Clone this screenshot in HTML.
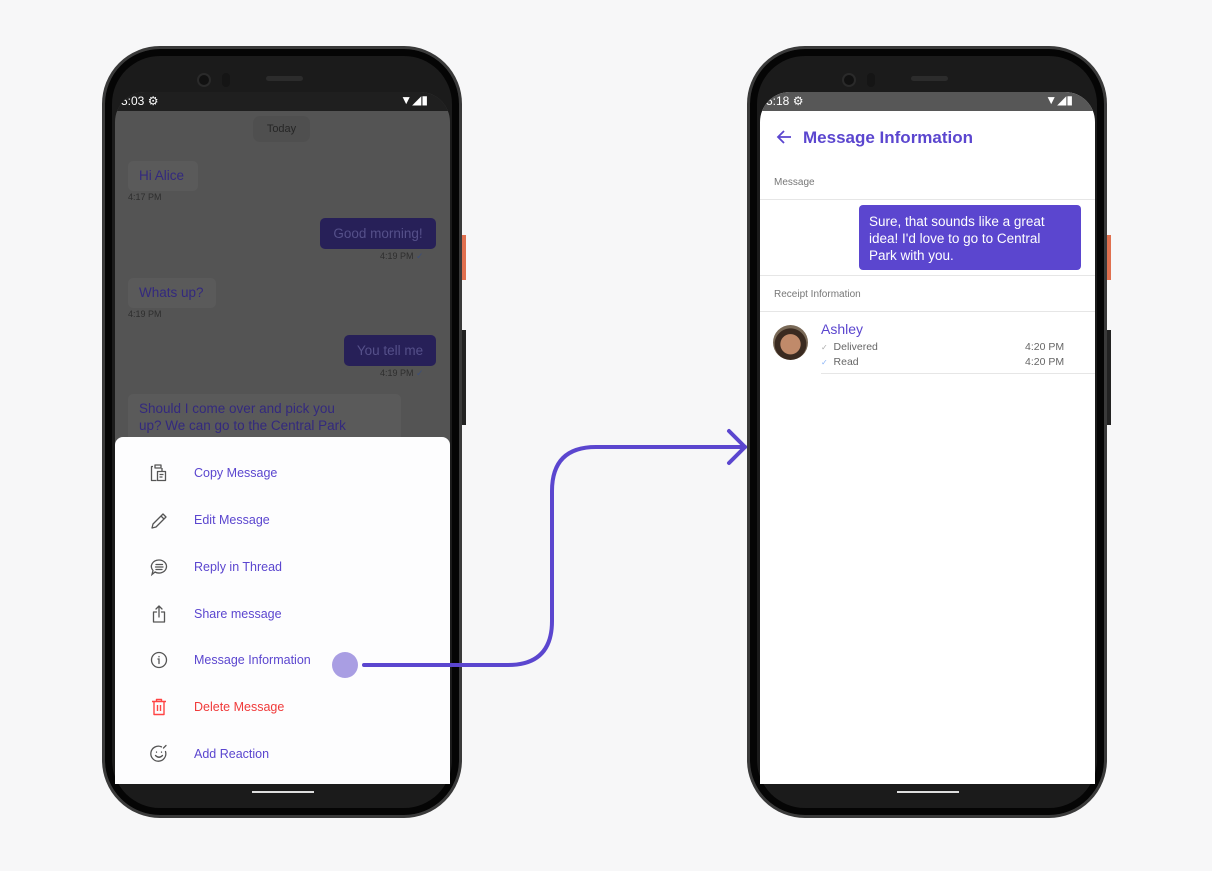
<!DOCTYPE html>
<html><head><meta charset="utf-8"><style>
*{margin:0;padding:0;box-sizing:border-box}
body{width:1212px;height:871px;background:#f7f7f8;position:relative;overflow:hidden;font-family:"Liberation Sans",Arial,sans-serif}
.abs{position:absolute}
.phone{position:absolute;width:360px;height:772px;top:46px;background:#1b1b1b;border-radius:58px;border:3px solid #3a3a3a;box-shadow:inset 0 0 0 7px #050505}
.screen{position:absolute;left:10px;top:43px;width:335px;height:692px;border-radius:30px 30px 0 0;overflow:hidden;background:#fff}
.sb{position:absolute;left:0;top:0;width:335px;height:19px;color:#fff;font-size:12px}
.btn{position:absolute;background:#222}
.ic{position:absolute;left:34px}
.rb{background:#5a5a5a;color:#33297e}
.sbub{background:#272058;color:#55508a}
.tm{color:#2e2e2e;font-size:9px}
</style></head><body>

<!-- Phone 1 -->
<div class="phone" style="left:102px">
  <div class="abs" style="left:92px;top:24px;width:14px;height:14px;border-radius:50%;background:#111;border:2px solid #2a2a2a"></div>
  <div class="abs" style="left:117px;top:24px;width:8px;height:14px;border-radius:4px;background:#151515"></div>
  <div class="abs" style="left:161px;top:27px;width:37px;height:5px;border-radius:3px;background:#2c2c2c"></div>
  <div class="screen" style="background:#545454">
    <div class="abs" style="left:138px;top:24px;width:57px;height:26px;border-radius:7px;background:#4f4f4f;color:#262626;font-size:11px;text-align:center;line-height:26px">Today</div>
    <div class="abs rb" style="left:13px;top:69px;width:70px;height:30px;border-radius:5px;font-size:13.5px;line-height:30px;padding-left:11px">Hi Alice</div>
    <div class="abs tm" style="left:13px;top:100px">4:17 PM</div>
    <div class="abs sbub" style="left:205px;top:126px;width:116px;height:31px;border-radius:5px;font-size:13.5px;line-height:31px;text-align:center">Good morning!</div>
    <div class="abs tm" style="left:265px;top:159px">4:19 PM <span style="color:#3c4e7a">✓</span></div>
    <div class="abs rb" style="left:13px;top:186px;width:88px;height:30px;border-radius:5px;font-size:13.5px;line-height:30px;padding-left:11px">Whats up?</div>
    <div class="abs tm" style="left:13px;top:217px">4:19 PM</div>
    <div class="abs sbub" style="left:229px;top:243px;width:92px;height:31px;border-radius:5px;font-size:13.5px;line-height:31px;text-align:center">You tell me</div>
    <div class="abs tm" style="left:265px;top:276px">4:19 PM <span style="color:#3c4e7a">✓</span></div>
    <div class="abs rb" style="left:13px;top:302px;width:273px;height:60px;border-radius:5px;font-size:13.5px;line-height:17px;padding:6px 11px 0 11px"><span style="display:block;width:215px">Should I come over and pick you up? We can go to the Central Park</span></div>
    <div class="sb" style="background:#1f1f1f"><span style="position:absolute;left:6px;top:2px">5:03 ⚙</span><span style="position:absolute;right:22px;top:1px">▼◢▮</span></div>
    <div class="abs" style="left:0;top:345px;width:335px;height:347px;background:#fdfdfe;border-radius:8px 8px 0 0;font-size:12.5px;color:#5b46cf">
      <svg class="ic" style="top:26px" width="20" height="20" viewBox="0 0 20 20" fill="none" stroke="#555" stroke-width="1.3" stroke-linejoin="round"><path d="M6 2h6v3H6zM4 3.5H2.5v14h5M13 5v3M8.5 8.5h8v9h-8zM10.5 11.5h4M10.5 14h3"/></svg>
      <svg class="ic" style="top:73px" width="20" height="20" viewBox="0 0 20 20" fill="none" stroke="#555" stroke-width="1.3" stroke-linejoin="round"><path d="M3 18l1-4L14 4l3 3L7 17zM12 6l3 3"/></svg>
      <svg class="ic" style="top:120px" width="20" height="20" viewBox="0 0 20 20" fill="none" stroke="#555" stroke-width="1.3" stroke-linecap="round"><path d="M10 3a7.5 6.5 0 1 1-4 12l-3 2.5 1-4A7.5 6.5 0 0 1 10 3zM7 7.5h6.5M6.5 10h7.5M7 12.5h6"/></svg>
      <svg class="ic" style="top:167px" width="20" height="20" viewBox="0 0 20 20" fill="none" stroke="#555" stroke-width="1.3" stroke-linecap="round" stroke-linejoin="round"><path d="M10 13V2M7 5l3-3 3 3M7.5 8H4.5v10h11V8h-3"/></svg>
      <svg class="ic" style="top:213px" width="20" height="20" viewBox="0 0 20 20" fill="none" stroke="#555" stroke-width="1.3" stroke-linecap="round"><circle cx="10" cy="10" r="7.5"/><path d="M9 9h1v4.5M10 6.5v.3"/></svg>
      <svg class="ic" style="top:260px" width="20" height="20" viewBox="0 0 20 20" fill="none" stroke="#f44" stroke-width="1.4" stroke-linejoin="round"><path d="M3 4.5h14M7.5 4.5V2.5h5v2M5 4.5v13h10v-13M8.5 8v6M11.5 8v6"/></svg>
      <svg class="ic" style="top:307px" width="20" height="20" viewBox="0 0 20 20" fill="none" stroke="#555" stroke-width="1.3" stroke-linecap="round"><path d="M16.5 7.5A7.5 7.5 0 1 1 12.5 2.9"/><path d="M6.5 11.5q3.5 3.5 7 0M7.5 8v.2M12.5 8v.2M14.5 4l2.5-2.5"/></svg>
      <div class="abs" style="left:79px;top:29px">Copy Message</div>
      <div class="abs" style="left:79px;top:76px">Edit Message</div>
      <div class="abs" style="left:79px;top:123px">Reply in Thread</div>
      <div class="abs" style="left:79px;top:170px">Share message</div>
      <div class="abs" style="left:79px;top:216px">Message Information</div>
      <div class="abs" style="left:79px;top:263px;color:#f03a3a">Delete Message</div>
      <div class="abs" style="left:79px;top:310px">Add Reaction</div>
    </div>
  </div>
  <div class="abs" style="left:147px;top:742px;width:62px;height:2px;background:#ddd"></div>
</div>
<div class="btn" style="left:462px;top:235px;width:4px;height:45px;background:#e0704f"></div>
<div class="btn" style="left:462px;top:330px;width:4px;height:95px"></div>

<!-- Phone 2 -->
<div class="phone" style="left:747px">
  <div class="abs" style="left:92px;top:24px;width:14px;height:14px;border-radius:50%;background:#111;border:2px solid #2a2a2a"></div>
  <div class="abs" style="left:117px;top:24px;width:8px;height:14px;border-radius:4px;background:#151515"></div>
  <div class="abs" style="left:161px;top:27px;width:37px;height:5px;border-radius:3px;background:#2c2c2c"></div>
  <div class="screen">
    <div class="sb" style="background:#575757"><span style="position:absolute;left:6px;top:2px">5:18 ⚙</span><span style="position:absolute;right:22px;top:1px">▼◢▮</span></div>
    <svg class="abs" style="left:16px;top:37px" width="16" height="16" viewBox="0 0 16 16" fill="none" stroke="#5b46cf" stroke-width="1.8"><path d="M15 8H2M8 2L2 8l6 6"/></svg>
    <div class="abs" style="left:43px;top:36px;font-size:17px;font-weight:bold;color:#5b46cf">Message Information</div>
    <div class="abs" style="left:14px;top:85px;font-size:10px;color:#777">Message</div>
    <div class="abs" style="left:0;top:107px;width:335px;height:1px;background:#e6e6e6"></div>
    <div class="abs" style="left:99px;top:113px;width:222px;height:65px;border-radius:4px;background:#5b46cf;color:#fff;font-size:13.5px;line-height:17px;padding:8px 10px">Sure, that sounds like a great idea! I'd love to go to Central Park with you.</div>
    <div class="abs" style="left:0;top:183px;width:335px;height:1px;background:#e6e6e6"></div>
    <div class="abs" style="left:14px;top:197px;font-size:10px;color:#777">Receipt Information</div>
    <div class="abs" style="left:0;top:219px;width:335px;height:1px;background:#e6e6e6"></div>
    <div class="abs" style="left:13px;top:233px;width:35px;height:35px;border-radius:50%;background:radial-gradient(circle at 50% 55%,#c08a6a 0 38%,#3a2a20 40% 60%,#7a6a58 62%)"></div>
    <div class="abs" style="left:61px;top:229px;font-size:14px;color:#5b46cf">Ashley</div>
    <div class="abs" style="left:61px;top:248px;font-size:10.5px;color:#666;line-height:15px"><span style="color:#aaa;font-size:8px">✓</span>&nbsp; Delivered<br><span style="color:#8ab4f8;font-size:8px">✓</span>&nbsp; Read</div>
    <div class="abs" style="left:265px;top:248px;font-size:10.5px;color:#666;line-height:15px">4:20 PM<br>4:20 PM</div>
    <div class="abs" style="left:61px;top:281px;width:274px;height:1px;background:#e6e6e6"></div>
  </div>
  <div class="abs" style="left:147px;top:742px;width:62px;height:2px;background:#ddd"></div>
</div>
<div class="btn" style="left:1107px;top:235px;width:4px;height:45px;background:#e0704f"></div>
<div class="btn" style="left:1107px;top:330px;width:4px;height:95px"></div>

<!-- Arrow -->
<svg class="abs" style="left:0;top:0" width="1212" height="871" fill="none">
  <path d="M364 665H508Q552 665 552 621V491Q552 447 596 447H745" stroke="#5b46cf" stroke-width="4" stroke-linecap="round"/>
  <path d="M729 431L745 447L729 463" stroke="#5b46cf" stroke-width="4" stroke-linecap="round" stroke-linejoin="round"/>
  <circle cx="345" cy="665" r="13" fill="#a99ee3"/>
</svg>
</body></html>
